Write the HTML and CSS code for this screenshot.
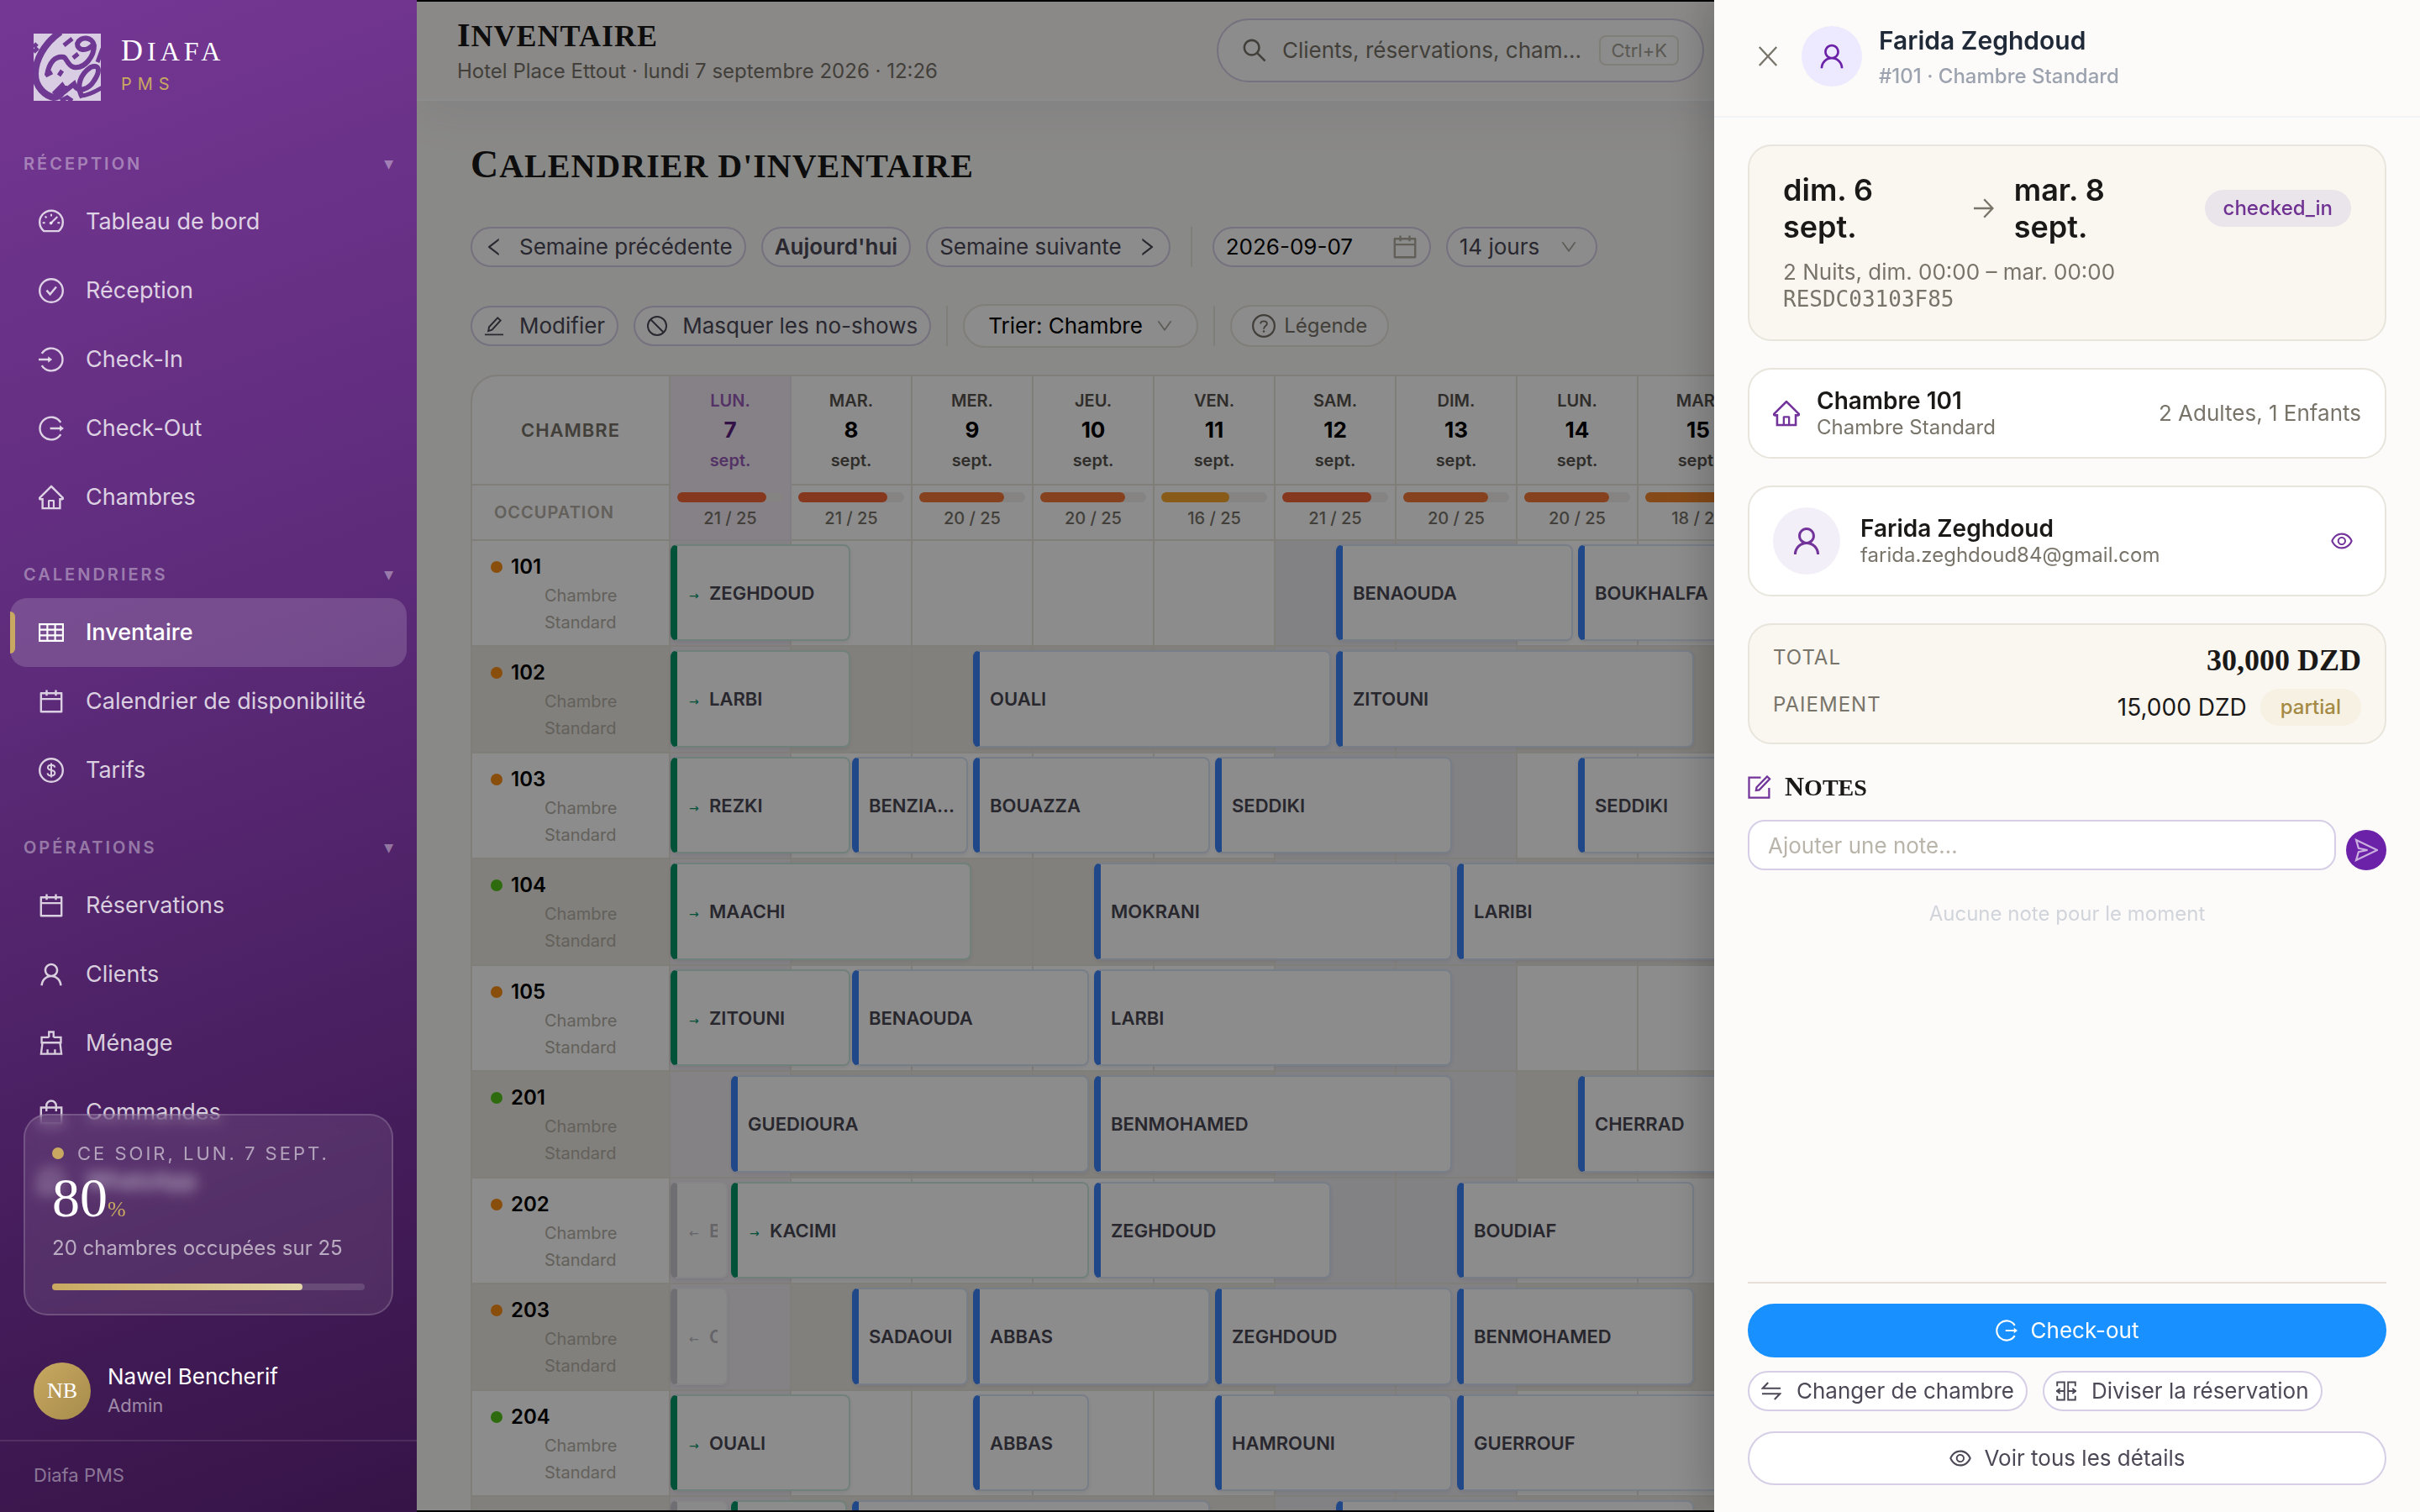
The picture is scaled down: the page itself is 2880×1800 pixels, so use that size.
FILE: index.html
```html
<!DOCTYPE html>
<html lang="fr">
<head>
<meta charset="utf-8">
<meta name="viewport" content="width=device-width, initial-scale=1">
<title>Inventaire · Diafa PMS</title>
<link rel="stylesheet" href="styles.css">
</head>
<body>
<svg class="sprite" aria-hidden="true">
  <symbol id="i-user" viewBox="64 64 896 896"><path d="M858.5 763.6a374 374 0 00-80.6-119.5 375.63 375.63 0 00-119.5-80.6c-.4-.2-.8-.3-1.2-.5C719.5 518 760 444.7 760 362c0-137-111-248-248-248S264 225 264 362c0 82.7 40.5 156 102.8 201.1-.4.2-.8.3-1.2.5-44.8 18.9-85 46-119.5 80.6a375.63 375.63 0 00-80.6 119.5A371.7 371.7 0 00136 901.8a8 8 0 008 8.2h60c4.4 0 7.9-3.5 8-7.8 2-77.2 33-149.5 87.8-204.3 56.7-56.7 132-87.9 212.2-87.9s155.5 31.2 212.2 87.9C779 752.7 810 825 812 902.2c.1 4.4 3.6 7.8 8 7.8h60a8 8 0 008-8.2c-1-47.8-10.9-94.3-29.5-138.2zM512 534c-45.9 0-89.1-17.9-121.6-50.4S340 407.9 340 362c0-45.9 17.9-89.1 50.4-121.6S466.1 190 512 190s89.1 17.9 121.6 50.4S684 316.1 684 362c0 45.9-17.9 89.1-50.4 121.6S557.9 534 512 534z"/></symbol>
  <symbol id="i-home" viewBox="64 64 896 896"><path d="M946.5 505L560.1 118.8l-25.9-25.9a31.5 31.5 0 00-44.4 0L77.5 505a63.9 63.9 0 00-18.8 46c.4 35.2 29.7 63.3 64.9 63.3h42.5V940h691.8V614.3h43.4c17.1 0 33.2-6.7 45.3-18.8a63.6 63.6 0 0018.7-45.3c0-17-6.7-33.1-18.8-45.2zM568 868H456V664h112v204zm217.9-325.7V868H632V640c0-22.1-17.9-40-40-40H432c-22.1 0-40 17.9-40 40v228H238.1V542.3h-96l370-369.7 23.1 23.1L882 542.3h-96.1z"/></symbol>
  <symbol id="i-eye" viewBox="64 64 896 896"><path d="M942.2 486.2C847.4 286.5 704.1 186 512 186c-192.2 0-335.4 100.5-430.2 300.3a60.3 60.3 0 000 51.5C176.6 737.5 319.9 838 512 838c192.2 0 335.4-100.5 430.2-300.3 7.7-16.2 7.7-35 0-51.5zM512 766c-161.3 0-279.4-81.8-362.7-254C232.6 339.8 350.7 258 512 258c161.3 0 279.4 81.8 362.7 254C791.5 684.2 673.4 766 512 766zm-4-430c-97.2 0-176 78.8-176 176s78.8 176 176 176 176-78.8 176-176-78.8-176-176-176zm0 288c-61.9 0-112-50.1-112-112s50.1-112 112-112 112 50.1 112 112-50.1 112-112 112z"/></symbol>
  <symbol id="i-calendar" viewBox="64 64 896 896"><path d="M880 184H712v-64c0-4.4-3.6-8-8-8h-56c-4.4 0-8 3.6-8 8v64H384v-64c0-4.4-3.6-8-8-8h-56c-4.4 0-8 3.6-8 8v64H144c-17.7 0-32 14.3-32 32v664c0 17.7 14.3 32 32 32h736c17.7 0 32-14.3 32-32V216c0-17.7-14.3-32-32-32zm-40 656H184V460h656v380zM184 392V256h128v48c0 4.4 3.6 8 8 8h56c4.4 0 8-3.6 8-8v-48h256v48c0 4.4 3.6 8 8 8h56c4.4 0 8-3.6 8-8v-48h128v136H184z"/></symbol>
  <symbol id="i-left" viewBox="64 64 896 896"><path d="M724 218.3V141c0-6.7-7.7-10.4-12.9-6.3L260.3 486.8a31.86 31.86 0 000 50.3l450.8 352.1c5.3 4.1 12.9.4 12.9-6.3v-77.3c0-4.9-2.3-9.6-6.1-12.6l-360-281 360-281.1c3.8-3 6.1-7.7 6.1-12.6z"/></symbol>
  <symbol id="i-right" viewBox="64 64 896 896"><path d="M765.7 486.8L314.9 134.7A7.97 7.97 0 00302 141v77.3c0 4.9 2.3 9.6 6.1 12.6l360 281.1-360 281.1c-3.9 3-6.1 7.7-6.1 12.6V883c0 6.7 7.7 10.4 12.9 6.3l450.8-352.1a31.96 31.96 0 000-50.4z"/></symbol>
  <symbol id="i-down" viewBox="64 64 896 896"><path d="M884 256h-75c-5.1 0-9.9 2.5-12.9 6.6L512 654.2 227.9 262.6c-3-4.1-7.8-6.6-12.9-6.6h-75c-6.5 0-10.3 7.4-6.5 12.7l352.6 486.1c12.8 17.6 39 17.6 51.7 0l352.6-486.1c3.9-5.3.1-12.7-6.4-12.7z"/></symbol>
  <symbol id="i-search" viewBox="64 64 896 896"><path d="M909.6 854.5L649.9 594.8C690.2 542.7 712 479 712 412c0-80.2-31.3-155.4-87.9-212.1-56.6-56.7-132-87.9-212.1-87.9s-155.5 31.3-212.1 87.9C143.2 256.5 112 331.8 112 412c0 80.1 31.3 155.5 87.9 212.1C256.5 680.8 331.8 712 412 712c67 0 130.6-21.8 182.7-62l259.7 259.6a8.2 8.2 0 0011.6 0l43.6-43.5a8.2 8.2 0 000-11.6zM570.4 570.4C528 612.7 471.8 636 412 636s-116-23.3-158.4-65.6C211.3 528 188 471.8 188 412s23.3-116.1 65.6-158.4C296 211.3 352.2 188 412 188s116.1 23.2 158.4 65.6S636 352.2 636 412s-23.3 116.1-65.6 158.4z"/></symbol>
  <symbol id="i-dashboard" viewBox="64 64 896 896"><g fill="none" stroke="currentColor" stroke-width="72"><path d="M250 844A412 412 0 1 1 774 844Z" stroke-linejoin="round"/><path d="M512 236v84M292 318l56 56M204 548h88M732 548h88" stroke-width="60"/><path d="M490 570L730 336" stroke-width="64"/></g><circle cx="500" cy="560" r="56"/></symbol>
  <symbol id="i-check" viewBox="64 64 896 896"><g fill="none" stroke="currentColor" stroke-width="72"><circle cx="512" cy="512" r="412"/><path d="M346 500L470 640L690 380"/></g></symbol>
  <symbol id="i-login" viewBox="64 64 896 896"><path fill="none" stroke="currentColor" stroke-width="72" d="M176 300A400 400 0 1 1 176 724M64 512H430"/><path d="M400 400L546 512L400 624Z"/></symbol>
  <symbol id="i-logout" viewBox="64 64 896 896"><path fill="none" stroke="currentColor" stroke-width="72" d="M848 300A400 400 0 1 0 848 724M470 512H840"/><path d="M814 400L960 512L814 624Z"/></symbol>
  <symbol id="i-table" viewBox="64 64 896 896"><path fill="none" stroke="currentColor" stroke-width="64" d="M96 216H928V808H96ZM96 410H928M96 614H928M374 216V808M650 216V808"/></symbol>
  <symbol id="i-dollar" viewBox="64 64 896 896"><g fill="none" stroke="currentColor" stroke-width="72"><circle cx="512" cy="512" r="412"/><path stroke-width="60" d="M640 408C632 346 580 322 512 322C440 322 390 356 390 412C390 540 642 470 642 610C642 672 586 704 512 704C436 704 386 676 380 612M512 256V768"/></g></symbol>
  <symbol id="i-broom" viewBox="64 64 896 896"><path fill="none" stroke="currentColor" stroke-width="70" d="M430 300V110H594V300M430 300H170V490H854V300H594M200 490L150 890H874L824 490M380 890V730M644 890V730"/></symbol>
  <symbol id="i-bag" viewBox="64 64 896 896"><path fill="none" stroke="currentColor" stroke-width="72" d="M148 350H876V908H148ZM340 480V280A172 172 0 0 1 684 280V480"/></symbol>
  <symbol id="i-chat" viewBox="64 64 896 896"><path fill="none" stroke="currentColor" stroke-width="76" d="M110 914L164 716A400 400 0 1 1 310 860ZM370 350Q390 620 670 670"/></symbol>
  <symbol id="i-edit" viewBox="64 64 896 896"><path fill="none" stroke="currentColor" stroke-width="72" d="M100 900H924M256 740L290 560L670 150L800 270L420 690Z"/></symbol>
  <symbol id="i-stop" viewBox="64 64 896 896"><g fill="none" stroke="currentColor" stroke-width="72"><circle cx="512" cy="512" r="412"/><path d="M222 222L802 802"/></g></symbol>
  <symbol id="i-question" viewBox="64 64 896 896"><g fill="none" stroke="currentColor" stroke-width="72"><circle cx="512" cy="512" r="412"/><path stroke-width="60" d="M390 432C390 300 634 300 634 432C634 520 512 510 512 630"/></g><circle cx="512" cy="722" r="40"/></symbol>
  <symbol id="i-close" viewBox="64 64 896 896"><path fill="none" stroke="currentColor" stroke-width="86" d="M130 100L894 924M894 100L130 924"/></symbol>
  <symbol id="i-arrow" viewBox="64 64 896 896"><path fill="none" stroke="currentColor" stroke-width="86" d="M64 512H900M520 110L900 512L520 914"/></symbol>
  <symbol id="i-form" viewBox="64 64 896 896"><path fill="none" stroke="currentColor" stroke-width="72" d="M560 148H112V912H876V540M380 640L400 520L800 110L900 200L500 620Z"/></symbol>
  <symbol id="i-send" viewBox="64 64 896 896"><path fill="none" stroke="currentColor" stroke-width="72" d="M130 130L930 512L130 894L220 580L560 512L220 444Z"/></symbol>
  <symbol id="i-swap" viewBox="64 64 896 896"><path fill="none" stroke="currentColor" stroke-width="76" d="M924 390H130L370 140M100 634H894L654 884"/></symbol>
  <symbol id="i-split" viewBox="64 64 896 896"><path fill="none" stroke="currentColor" stroke-width="72" d="M110 300V120H430V904H110V724M914 300V120H594V904H914V724M64 512H430M594 512H960M240 400L100 512L240 624M784 400L924 512L784 624"/></symbol>
</svg>

<div class="app">
  <aside class="sidebar">
    <a class="brand" href="#">
      <svg class="brand-logo" viewBox="0 0 80 80" aria-hidden="true">
        <rect width="80" height="80" fill="#d9cde4"/>
        <g fill="none" stroke="#6f3892">
          <path stroke-width="8" d="M32 -2C12 12 2 32 2 48C2 64 14 74 24 76C32 76 36 68 36 62"/>
          <path stroke-width="6" d="M16 50C18 34 26 26 36 28C40 30 40 38 48 40C62 42 72 26 72 14C70 4 56 2 52 12C52 20 62 22 70 14"/>
          <path stroke-width="6" d="M24 72L34 62L38 68L48 60C52 72 66 66 72 56C80 44 78 36 68 40C56 48 50 62 58 76"/>
          <path stroke-width="5" d="M36 14L46 6M47 29L53 24M56 74C64 74 72 70 82 64M0 22L5 17M0 16L4 12M32 80L40 76L46 80"/>
          <path stroke-width="5" d="M14 50L22 46M30 50L34 44M76 34L82 18"/>
        </g>
      </svg>
      <span class="brand-text"><span class="brand-name">Diafa</span><span class="brand-sub">PMS</span></span>
    </a>
    <nav class="nav" aria-label="Navigation principale">
      <section>
        <h2 class="nav-title">Réception<span class="caret">▼</span></h2>
        <a class="nav-item" href="#"><svg class="icon"><use href="#i-dashboard"/></svg>Tableau de bord</a>
        <a class="nav-item" href="#"><svg class="icon"><use href="#i-check"/></svg>Réception</a>
        <a class="nav-item" href="#"><svg class="icon"><use href="#i-login"/></svg>Check-In</a>
        <a class="nav-item" href="#"><svg class="icon"><use href="#i-logout"/></svg>Check-Out</a>
        <a class="nav-item" href="#"><svg class="icon"><use href="#i-home"/></svg>Chambres</a>
      </section>
      <section>
        <h2 class="nav-title">Calendriers<span class="caret">▼</span></h2>
        <a class="nav-item is-active" href="#" aria-current="page"><svg class="icon"><use href="#i-table"/></svg>Inventaire</a>
        <a class="nav-item" href="#"><svg class="icon"><use href="#i-calendar"/></svg>Calendrier de disponibilité</a>
        <a class="nav-item" href="#"><svg class="icon"><use href="#i-dollar"/></svg>Tarifs</a>
      </section>
      <section>
        <h2 class="nav-title">Opérations<span class="caret">▼</span></h2>
        <a class="nav-item" href="#"><svg class="icon"><use href="#i-calendar"/></svg>Réservations</a>
        <a class="nav-item" href="#"><svg class="icon"><use href="#i-user"/></svg>Clients</a>
        <a class="nav-item" href="#"><svg class="icon"><use href="#i-broom"/></svg>Ménage</a>
        <a class="nav-item" href="#"><svg class="icon"><use href="#i-bag"/></svg>Commandes</a>
        <a class="nav-item" href="#"><svg class="icon"><use href="#i-chat"/></svg>WhatsApp</a>
      </section>
    </nav>
    <div class="sidebar-bottom">
      <div class="tonight">
        <p class="tonight-label"><span class="tonight-dot"></span>Ce soir, lun. 7 sept.</p>
        <p class="tonight-rate">80<span>%</span></p>
        <p class="tonight-note">20 chambres occupées sur 25</p>
        <div class="tonight-track"><div class="tonight-fill" style="width:80%"></div></div>
      </div>
      <div class="account">
        <span class="account-avatar">NB</span>
        <span class="account-text"><span class="account-name">Nawel Bencherif</span><span class="account-role">Admin</span></span>
      </div>
      <p class="sidebar-foot">Diafa PMS</p>
    </div>
  </aside>

  <main class="main">
    <header class="topbar">
      <div>
        <p class="topbar-title">Inventaire</p>
        <p class="topbar-sub">Hotel Place Ettout · lundi 7 septembre 2026 · 12:26</p>
      </div>
      <label class="search">
        <svg class="icon"><use href="#i-search"/></svg>
        <input type="text" placeholder="Clients, réservations, cham..." aria-label="Rechercher">
        <kbd>Ctrl+K</kbd>
      </label>
    </header>

    <div class="content">
      <h1 class="page-title">Calendrier d'inventaire</h1>
      <div class="toolbar">
        <button class="pill" type="button"><svg class="icon"><use href="#i-left"/></svg>Semaine précédente</button>
        <button class="pill pill-strong" type="button">Aujourd'hui</button>
        <button class="pill" type="button">Semaine suivante<svg class="icon"><use href="#i-right"/></svg></button>
        <span class="separator separator-wide"></span>
        <label class="pill date"><input type="text" value="2026-09-07" aria-label="Date de début"><svg class="icon"><use href="#i-calendar"/></svg></label>
        <label class="pill range"><select aria-label="Période"><option>14 jours</option></select><svg class="icon"><use href="#i-down"/></svg></label>
      </div>
      <div class="toolbar toolbar-second">
        <button class="pill" type="button"><svg class="icon"><use href="#i-edit"/></svg>Modifier</button>
        <button class="pill" type="button"><svg class="icon"><use href="#i-stop"/></svg>Masquer les no-shows</button>
        <span class="separator"></span>
        <label class="pill sort"><select aria-label="Tri"><option>Trier: Chambre</option></select><svg class="icon"><use href="#i-down"/></svg></label>
        <span class="separator"></span>
        <button class="pill legend" type="button"><svg class="icon"><use href="#i-question"/></svg>Légende</button>
      </div>

      <div class="board">
        <table class="grid">
          <colgroup><col class="col-room"><col span="14"></colgroup>
          <thead>
            <tr class="days">
              <th class="corner" scope="col">Chambre</th>
              <th class="today" scope="col"><span class="dow">lun.</span><span class="num">7</span><span class="month">sept.</span></th>
              <th scope="col"><span class="dow">mar.</span><span class="num">8</span><span class="month">sept.</span></th>
              <th scope="col"><span class="dow">mer.</span><span class="num">9</span><span class="month">sept.</span></th>
              <th scope="col"><span class="dow">jeu.</span><span class="num">10</span><span class="month">sept.</span></th>
              <th scope="col"><span class="dow">ven.</span><span class="num">11</span><span class="month">sept.</span></th>
              <th scope="col"><span class="dow">sam.</span><span class="num">12</span><span class="month">sept.</span></th>
              <th scope="col"><span class="dow">dim.</span><span class="num">13</span><span class="month">sept.</span></th>
              <th scope="col"><span class="dow">lun.</span><span class="num">14</span><span class="month">sept.</span></th>
              <th scope="col"><span class="dow">mar.</span><span class="num">15</span><span class="month">sept.</span></th>
              <th></th><th></th><th></th><th></th><th></th>
            </tr>
            <tr class="load">
              <th class="load-title" scope="row">Occupation</th>
              <td class="today"><div class="meter"><div class="lv4" style="width:84%"></div></div>21 / 25</td>
              <td><div class="meter"><div class="lv4" style="width:84%"></div></div>21 / 25</td>
              <td><div class="meter"><div class="lv3" style="width:80%"></div></div>20 / 25</td>
              <td><div class="meter"><div class="lv3" style="width:80%"></div></div>20 / 25</td>
              <td><div class="meter"><div class="lv1" style="width:64%"></div></div>16 / 25</td>
              <td><div class="meter"><div class="lv4" style="width:84%"></div></div>21 / 25</td>
              <td><div class="meter"><div class="lv3" style="width:80%"></div></div>20 / 25</td>
              <td><div class="meter"><div class="lv3" style="width:80%"></div></div>20 / 25</td>
              <td><div class="meter"><div class="lv2" style="width:72%"></div></div>18 / 25</td>
              <td></td><td></td><td></td><td></td><td></td>
            </tr>
          </thead>
          <tbody>
            <tr>
              <th scope="row"><span class="room dirty">101</span><span class="type">Chambre Standard</span></th>
              <td><a class="stay in early" href="#" style="--n:1"><i>→</i>ZEGHDOUD</a></td><td></td><td></td><td></td><td></td>
              <td><a class="stay" href="#" style="--n:2">BENAOUDA</a></td><td></td>
              <td><a class="stay" href="#" style="--n:3">BOUKHALFA</a></td><td></td><td></td><td></td><td></td><td></td><td></td>
            </tr>
            <tr>
              <th scope="row"><span class="room dirty">102</span><span class="type">Chambre Standard</span></th>
              <td><a class="stay in early" href="#" style="--n:1"><i>→</i>LARBI</a></td><td></td>
              <td><a class="stay" href="#" style="--n:3">OUALI</a></td><td></td><td></td>
              <td><a class="stay" href="#" style="--n:3">ZITOUNI</a></td><td></td><td></td><td></td><td></td><td></td><td></td><td></td><td></td>
            </tr>
            <tr>
              <th scope="row"><span class="room dirty">103</span><span class="type">Chambre Standard</span></th>
              <td><a class="stay in early" href="#" style="--n:1"><i>→</i>REZKI</a></td>
              <td><a class="stay" href="#" style="--n:1">BENZIA...</a></td>
              <td><a class="stay" href="#" style="--n:2">BOUAZZA</a></td><td></td>
              <td><a class="stay" href="#" style="--n:2">SEDDIKI</a></td><td></td><td></td>
              <td><a class="stay" href="#" style="--n:3">SEDDIKI</a></td><td></td><td></td><td></td><td></td><td></td><td></td>
            </tr>
            <tr>
              <th scope="row"><span class="room clean">104</span><span class="type">Chambre Standard</span></th>
              <td><a class="stay in early" href="#" style="--n:2"><i>→</i>MAACHI</a></td><td></td><td></td>
              <td><a class="stay" href="#" style="--n:3">MOKRANI</a></td><td></td><td></td>
              <td><a class="stay" href="#" style="--n:3">LARIBI</a></td><td></td><td></td><td></td><td></td><td></td><td></td><td></td>
            </tr>
            <tr>
              <th scope="row"><span class="room dirty">105</span><span class="type">Chambre Standard</span></th>
              <td><a class="stay in early" href="#" style="--n:1"><i>→</i>ZITOUNI</a></td>
              <td><a class="stay" href="#" style="--n:2">BENAOUDA</a></td><td></td>
              <td><a class="stay" href="#" style="--n:3">LARBI</a></td><td></td><td></td><td></td><td></td><td></td><td></td><td></td><td></td><td></td><td></td>
            </tr>
            <tr>
              <th scope="row"><span class="room clean">201</span><span class="type">Chambre Standard</span></th>
              <td><a class="stay" href="#" style="--n:3">GUEDIOURA</a></td><td></td><td></td>
              <td><a class="stay" href="#" style="--n:3">BENMOHAMED</a></td><td></td><td></td><td></td>
              <td><a class="stay" href="#" style="--n:3">CHERRAD</a></td><td></td><td></td><td></td><td></td><td></td><td></td>
            </tr>
            <tr>
              <th scope="row"><span class="room dirty">202</span><span class="type">Chambre Standard</span></th>
              <td><a class="stay out early" href="#" style="--n:0"><i>←</i><span>B</span></a><a class="stay in" href="#" style="--n:3"><i>→</i>KACIMI</a></td><td></td><td></td>
              <td><a class="stay" href="#" style="--n:2">ZEGHDOUD</a></td><td></td><td></td>
              <td><a class="stay" href="#" style="--n:2">BOUDIAF</a></td><td></td><td></td><td></td><td></td><td></td><td></td><td></td>
            </tr>
            <tr>
              <th scope="row"><span class="room dirty">203</span><span class="type">Chambre Standard</span></th>
              <td><a class="stay out early" href="#" style="--n:0"><i>←</i><span>C</span></a></td>
              <td><a class="stay" href="#" style="--n:1">SADAOUI</a></td>
              <td><a class="stay" href="#" style="--n:2">ABBAS</a></td><td></td>
              <td><a class="stay" href="#" style="--n:2">ZEGHDOUD</a></td><td></td>
              <td><a class="stay" href="#" style="--n:2">BENMOHAMED</a></td><td></td><td></td><td></td><td></td><td></td><td></td><td></td>
            </tr>
            <tr>
              <th scope="row"><span class="room clean">204</span><span class="type">Chambre Standard</span></th>
              <td><a class="stay in early" href="#" style="--n:1"><i>→</i>OUALI</a></td><td></td>
              <td><a class="stay" href="#" style="--n:1">ABBAS</a></td><td></td>
              <td><a class="stay" href="#" style="--n:2">HAMROUNI</a></td><td></td>
              <td><a class="stay" href="#" style="--n:3">GUERROUF</a></td><td></td><td></td><td></td><td></td><td></td><td></td><td></td>
            </tr>
            <tr>
              <th></th>
              <td><span class="stay out early" style="--n:0"></span><span class="stay in" style="--n:1"></span></td>
              <td><span class="stay" style="--n:3"></span></td><td></td><td></td>
              <td></td>
              <td><span class="stay" style="--n:3"></span></td><td></td><td></td><td></td><td></td><td></td><td></td><td></td><td></td>
            </tr>
          </tbody>
        </table>
      </div>
    </div>
  </main>

  <div class="mask"></div>

  <aside class="drawer" aria-label="Réservation">
    <header class="drawer-head">
      <button class="bare" type="button" aria-label="Fermer"><svg class="icon icon-24"><use href="#i-close"/></svg></button>
      <span class="drawer-avatar"><svg class="icon icon-32"><use href="#i-user"/></svg></span>
      <div class="drawer-heading">
        <h2 class="drawer-name">Farida Zeghdoud</h2>
        <p class="drawer-sub">#101 · Chambre Standard</p>
      </div>
    </header>
    <div class="drawer-body">
      <section class="card card-warm stay-card">
        <div class="dates">
          <strong>dim. 6<br>sept.</strong>
          <svg class="icon icon-24"><use href="#i-arrow"/></svg>
          <strong>mar. 8<br>sept.</strong>
          <span class="badge badge-status">checked_in</span>
        </div>
        <p class="stay-info">2 Nuits, dim. 00:00 – mar. 00:00</p>
        <p class="stay-info mono">RESDC03103F85</p>
      </section>
      <section class="card room-card">
        <svg class="icon icon-32"><use href="#i-home"/></svg>
        <div class="card-main"><h3 class="card-title">Chambre 101</h3><p class="card-sub">Chambre Standard</p></div>
        <span class="guests">2 Adultes, 1 Enfants</span>
      </section>
      <section class="card guest-card">
        <span class="guest-avatar"><svg class="icon icon-36"><use href="#i-user"/></svg></span>
        <div class="card-main"><h3 class="card-title">Farida Zeghdoud</h3><p class="card-sub">farida.zeghdoud84@gmail.com</p></div>
        <button class="bare" type="button" aria-label="Voir le client"><svg class="icon icon-26"><use href="#i-eye"/></svg></button>
      </section>
      <section class="card card-warm">
        <dl class="money">
          <div><dt>Total</dt><dd class="total">30,000 DZD</dd></div>
          <div><dt>Paiement</dt><dd>15,000 DZD<span class="badge badge-partial">partial</span></dd></div>
        </dl>
      </section>
      <section>
        <h3 class="notes-title"><svg class="icon icon-28"><use href="#i-form"/></svg><span>Notes</span></h3>
        <form class="note-form">
          <input type="text" placeholder="Ajouter une note..." aria-label="Ajouter une note">
          <button type="button" aria-label="Envoyer"><svg class="icon icon-28"><use href="#i-send"/></svg></button>
        </form>
        <p class="notes-empty">Aucune note pour le moment</p>
      </section>
    </div>
    <footer class="drawer-foot">
      <button class="pill pill-large pill-primary" type="button"><svg class="icon"><use href="#i-logout"/></svg>Check-out</button>
      <div class="foot-row">
        <button class="pill" type="button"><svg class="icon"><use href="#i-swap"/></svg>Changer de chambre</button>
        <button class="pill" type="button"><svg class="icon"><use href="#i-split"/></svg>Diviser la réservation</button>
      </div>
      <button class="pill pill-large" type="button"><svg class="icon"><use href="#i-eye"/></svg>Voir tous les détails</button>
    </footer>
  </aside>
</div>
</body>
</html>
```
FILE: styles.css
```css
:root {
  --drawer: 840px;
  --sidebar: 496px;
  --serif: "Liberation Serif", serif;
  --sans: Inter, "Liberation Sans", sans-serif;
  --ink: #1a1918;
  --muted: #78746a;
  --button-ink: #4c4856;
  --line: #e8e5dd;
  --lilac: #d6cee6;
  --purple: #6b21a8;
  --gold: #c9a961;
}

* { box-sizing: border-box; }

body {
  margin: 0;
  background: #000;
  color: var(--ink);
  font-family: var(--sans);
  font-size: 26px;
  line-height: 32px;
}

h1, h2, h3, p, dl, dd { margin: 0; }
a { color: inherit; text-decoration: none; }
button, input, select { font: inherit; color: inherit; }
input, select { border: 0; background: none; outline: 0; padding: 0; min-width: 0; }
select { appearance: none; }

.sprite { position: absolute; width: 0; height: 0; }
.icon { flex: none; width: 24px; height: 24px; fill: currentColor; }
.icon-24 { width: 24px; height: 24px; }
.icon-26 { width: 26px; height: 26px; }
.icon-28 { width: 28px; height: 28px; }
.icon-32 { width: 32px; height: 32px; }
.icon-36 { width: 36px; height: 36px; }

.app {
  display: grid;
  grid-template-columns: var(--sidebar) minmax(0, 1fr);
  height: 100vh;
  overflow: hidden;
}

/* Sidebar */
.sidebar {
  position: relative;
  z-index: 3;
  overflow: hidden;
  height: 100vh;
  background: linear-gradient(160deg, #753794 0%, #5d2b7a 42%, #461d5c 75%, #361447 100%);
}

.brand {
  display: flex;
  gap: 24px;
  padding: 40px 40px 24px;
}
.brand-logo { width: 80px; height: 80px; }
.brand-text { display: flex; flex-direction: column; }
.brand-name {
  color: #fff;
  font: 32px/40px var(--serif);
  letter-spacing: 5px;
  text-transform: uppercase;
}
.brand-name::first-letter { font-size: 36px; }
.brand-sub {
  color: var(--gold);
  font-size: 20px;
  line-height: 38px;
  letter-spacing: 7px;
}

.nav-title {
  display: flex;
  justify-content: space-between;
  align-items: center;
  padding: 39px 28px 16px;
  color: rgba(255, 255, 255, .4);
  font-size: 20px;
  line-height: 24px;
  font-weight: 600;
  letter-spacing: 3px;
  text-transform: uppercase;
}
.caret { font-size: 14px; letter-spacing: 0; font-family: "DejaVu Sans", sans-serif; }

.nav-item {
  position: relative;
  display: flex;
  align-items: center;
  gap: 26px;
  height: 82px;
  margin: 0 12px;
  padding: 0 34px;
  border-radius: 20px;
  color: rgba(255, 255, 255, .78);
  font-size: 27px;
}
.nav-item .icon { width: 30px; height: 30px; }
.nav-item.is-active {
  background: rgba(255, 255, 255, .16);
  color: #fff;
  font-weight: 500;
}
.nav-item.is-active::before {
  content: "";
  position: absolute;
  left: 0;
  top: 16px;
  bottom: 16px;
  width: 6px;
  border-radius: 0 6px 6px 0;
  background: var(--gold);
}

.sidebar-bottom {
  position: absolute;
  inset: auto 0 0;
}
.tonight {
  margin: 0 28px 56px;
  padding: 32px 32px 28px;
  border: 2px solid rgba(255, 255, 255, .16);
  border-radius: 28px;
  background: rgba(255, 255, 255, .09);
  backdrop-filter: blur(8px);
}
.tonight-label {
  display: flex;
  align-items: center;
  gap: 16px;
  color: rgba(255, 255, 255, .55);
  font-size: 22px;
  line-height: 26px;
  letter-spacing: 3px;
  text-transform: uppercase;
}
.tonight-dot {
  width: 14px;
  height: 14px;
  border-radius: 50%;
  background: var(--gold);
}
.tonight-rate {
  margin: 4px 0 8px;
  color: #fff;
  font: 66px/72px var(--serif);
}
.tonight-rate span { font-size: 26px; line-height: 26px; color: var(--gold); }
.tonight-note {
  color: rgba(255, 255, 255, .6);
  font-size: 24px;
  line-height: 32px;
}
.tonight-track {
  height: 8px;
  margin-top: 26px;
  border-radius: 4px;
  background: rgba(255, 255, 255, .14);
}
.tonight-fill {
  height: 8px;
  border-radius: 4px;
  background: linear-gradient(90deg, #c9a961, #e3d5a8);
}
.account {
  display: flex;
  align-items: center;
  gap: 20px;
  padding: 0 40px 24px;
}
.account-avatar {
  display: grid;
  place-items: center;
  width: 68px;
  height: 68px;
  border-radius: 50%;
  background: linear-gradient(135deg, #c9a961, #a68b4b);
  color: #fff;
  font: 26px/32px var(--serif);
}
.account-text { display: flex; flex-direction: column; }
.account-name { color: #fff; line-height: 34px; }
.account-role { color: rgba(255, 255, 255, .5); font-size: 22px; line-height: 34px; }
.sidebar-foot {
  padding: 24px 40px 28px;
  border-top: 2px solid rgba(255, 255, 255, .1);
  color: rgba(255, 255, 255, .42);
  font-size: 22px;
}

/* Main column */
.main {
  overflow: hidden;
  height: 100vh;
  border-block: 2px solid #000;
  background: #faf9f6;
}
.topbar {
  display: flex;
  justify-content: space-between;
  align-items: center;
  height: 118px;
  padding: 0 calc(var(--drawer) + 12px) 0 48px;
  border-bottom: 2px solid #fff;
  background: #fbfaf7;
  box-shadow: 0 8px 64px rgba(80, 50, 110, .08);
}
.topbar-title {
  font: bold 36px/48px var(--serif);
  letter-spacing: 1px;
  text-transform: uppercase;
}
.topbar-title::first-letter { font-size: 40px; }
.topbar-sub { color: var(--muted); font-size: 24px; line-height: 36px; }
.search {
  display: flex;
  align-items: center;
  gap: 18px;
  width: 580px;
  height: 76px;
  padding: 0 28px;
  border: 2px solid var(--lilac);
  border-radius: 38px;
  background: #fff;
  color: var(--muted);
}
.search .icon { width: 30px; height: 30px; }
.search input { flex: 1; }
.search input::placeholder { color: var(--muted); opacity: 1; }
.search kbd {
  padding: 0 12px;
  border: 2px solid var(--line);
  border-radius: 8px;
  color: #a5a196;
  font: 22px/32px var(--sans);
}

.content { padding: 48px 64px 0; }
.page-title {
  margin-bottom: 44px;
  font: bold 40px/56px var(--serif);
  letter-spacing: 1px;
  text-transform: uppercase;
}
.page-title::first-letter { font-size: 46px; }

.toolbar { display: flex; align-items: center; gap: 18px; height: 48px; }
.toolbar-second { margin-top: 44px; height: 52px; }
.separator { width: 2px; height: 48px; background: var(--line); }
.separator-wide { margin: 0 6px; }

.pill {
  display: flex;
  align-items: center;
  gap: 18px;
  height: 48px;
  padding: 0 14px;
  border: 2px solid var(--lilac);
  border-radius: 32px;
  background: #fff;
  color: var(--button-ink);
  white-space: nowrap;
}
.pill-strong { font-weight: 600; }
.date { width: 260px; color: #000; }
.date input { flex: 1; }
.date .icon { width: 30px; height: 30px; color: #b3aea3; }
.range .icon, .sort .icon { width: 20px; height: 20px; color: #aaa69c; }
.range { padding-right: 22px; gap: 24px; }
.sort { height: 52px; padding: 0 28px; gap: 16px; color: #000; border-color: var(--line); }
.legend { height: 50px; padding: 0 24px; gap: 10px; color: var(--muted); border-color: var(--line); font-size: 24px; }
.legend .icon { width: 28px; height: 28px; }

/* Inventory board */
.board {
  margin-top: 32px;
  overflow: hidden;
  border: 2px solid var(--line);
  border-radius: 32px 32px 0 0;
  background: #fff;
}
.grid {
  width: 100%;
  table-layout: fixed;
  border-spacing: 0;
}
.grid th, .grid td {
  position: relative;
  padding: 0;
  border: 0 solid var(--line);
  border-width: 0 2px 2px 0;
  vertical-align: top;
  font-weight: 400;
}
.col-room { width: 236px; }
.grid .days th { height: 130px; padding-top: 15px; }
.grid .days .corner {
  padding: 0;
  vertical-align: middle;
  color: var(--muted);
  font-size: 22px;
  font-weight: 600;
  letter-spacing: 1px;
  text-transform: uppercase;
}
.dow, .num, .month {
  display: block;
  color: #57534e;
  font-size: 20px;
  line-height: 28px;
  font-weight: 600;
}
.dow { text-transform: uppercase; }
.num { color: #000; font-size: 26px; line-height: 42px; font-weight: 700; }
.month { line-height: 30px; }
.grid thead .today { background: #f2ecf5; border-color: #ebe5ee; }
.grid thead .days .today { border-bottom-color: #f2ecf5; }
.today .dow, .today .month { color: #9a5cba; }
.today .num { color: #5b2080; }
.grid .load td {
  height: 66px;
  padding: 8px 8px 0;
  color: var(--muted);
  font-size: 20px;
  line-height: 28px;
  font-weight: 500;
  text-align: center;
}
.grid .load-title {
  padding-left: 26px;
  vertical-align: middle;
  color: #b5b0a6;
  font-size: 20px;
  font-weight: 600;
  letter-spacing: 1px;
  text-align: left;
  text-transform: uppercase;
}
.meter {
  height: 12px;
  margin-bottom: 5px;
  border-radius: 6px;
  background: #f3f1ee;
}
.meter div { height: 12px; border-radius: 6px; }
.lv1 { background: #f7a62c; }
.lv2 { background: #f5872c; }
.lv3 { background: #f5793a; }
.lv4 { background: #f4663a; }

.grid tbody tr { height: 126px; }
.grid tbody tr:nth-child(even) { height: 127px; background: #ece9e2; }
.grid tbody td:nth-of-type(1) { background: #f1edf3; }
.grid tbody td:nth-of-type(6),
.grid tbody td:nth-of-type(7) { background: #ededf3; }
.grid tbody th { padding: 13px 16px 0 22px; text-align: left; }
.room {
  display: flex;
  align-items: center;
  gap: 10px;
  color: #000;
  font-size: 24px;
  line-height: 36px;
  font-weight: 600;
}
.room::before {
  content: "";
  width: 14px;
  height: 14px;
  border-radius: 50%;
  background: #fa8c16;
}
.room.clean::before { background: #52c41a; }
.type {
  display: block;
  padding-left: 64px;
  color: #b5b0a6;
  font-size: 20px;
  line-height: 32px;
}

/* A stay runs from noon to noon, across the cells of its nights. */
.stay {
  position: absolute;
  z-index: 1;
  top: 4px;
  bottom: 5px;
  left: calc(50% + 1px);
  width: calc(var(--n) * (100% + 2px) - 6px);
  display: flex;
  align-items: center;
  padding-left: 12px;
  overflow: hidden;
  border: 2px solid #dbe6f8;
  border-left: 8px solid #3b82f6;
  border-radius: 8px;
  background: #fff;
  box-shadow: 0 2px 4px rgba(40, 40, 80, .08);
  color: #4a4754;
  font-size: 22px;
  font-weight: 600;
}
.stay i {
  width: 24px;
  padding-top: 6px;
  color: #059669;
  font: 14px/16px "DejaVu Sans", sans-serif;
}
.stay.in { border-color: #cdeadf; border-left-color: #059669; padding-left: 14px; }
.stay.early { left: 0; width: calc((var(--n) + .5) * (100% + 2px) - 2px); }
.stay.out { width: calc(50% - 3px); border-color: #f3f2f6; border-left-color: #c9c8d2; color: #b9b7c0; background: #faf9fb; padding-left: 14px; }
.stay.out i { color: #b9b7c0; }
.stay.out span { width: 10px; overflow: hidden; }

.mask {
  position: fixed;
  inset: 0;
  z-index: 2;
  background: rgba(0, 0, 0, .45);
}

/* Reservation drawer */
.drawer {
  position: fixed;
  inset: 0 0 0 auto;
  z-index: 4;
  display: flex;
  flex-direction: column;
  width: var(--drawer);
  background: #fcfbf9;
  box-shadow: -8px 0 48px rgba(0, 0, 0, .22);
}
.bare { display: flex; padding: 0; border: 0; background: none; color: var(--muted); }
.drawer-head {
  display: flex;
  align-items: center;
  height: 140px;
  padding: 0 52px 4px;
  border-bottom: 2px solid #f1f3f5;
}
.drawer-avatar {
  display: grid;
  place-items: center;
  width: 72px;
  height: 72px;
  margin: 0 20px 0 28px;
  border-radius: 50%;
  background: #ede9fe;
  color: var(--purple);
}
.drawer-heading { padding-top: 6px; }
.drawer-name { color: #1f2937; font-size: 30px; line-height: 42px; font-weight: 600; }
.drawer-sub { color: #9ca3af; font-size: 24px; line-height: 44px; font-weight: 500; }

.drawer-body {
  flex: 1;
  display: flex;
  flex-direction: column;
  gap: 32px;
  padding: 32px 40px 0;
}
.card {
  padding: 20px 28px;
  border: 2px solid var(--line);
  border-radius: 28px;
  background: #fff;
}
.card-warm { background: #faf7f1; }
.stay-card { padding: 30px 40px 32px; }
.dates {
  display: grid;
  grid-template-columns: 1fr 24px 1fr auto;
  gap: 24px;
  align-items: center;
  margin-bottom: 16px;
  color: var(--muted);
}
.dates strong { color: var(--ink); font-size: 36px; line-height: 44px; font-weight: 600; }
.badge {
  padding: 0 24px;
  border-radius: 22px;
  font-size: 24px;
  line-height: 44px;
  font-weight: 500;
}
.badge-status { padding: 0 22px; background: #eae4eb; color: #6f3292; }
.badge-partial { background: #f6f1e2; color: #a48a45; }
.stay-info { color: var(--muted); }
.mono { font-family: "DejaVu Sans Mono", monospace; }

.room-card, .guest-card { display: flex; align-items: center; color: #72339a; }
.room-card { gap: 20px; }
.guest-card { gap: 24px; padding: 24px 28px; }
.card-main { flex: 1; }
.card-title { color: var(--ink); font-size: 28px; line-height: 34px; font-weight: 600; }
.card-sub { color: var(--muted); font-size: 24px; line-height: 30px; }
.guests { color: var(--muted); }
.guest-avatar {
  display: grid;
  place-items: center;
  width: 80px;
  height: 80px;
  border-radius: 50%;
  background: #f3eff8;
}
.guest-card .bare { padding: 0 10px; color: #72339a; }

.money div { display: flex; justify-content: space-between; }
.money div + div { margin-top: 8px; }
.money dt {
  color: var(--muted);
  font-size: 24px;
  line-height: 38px;
  letter-spacing: 1px;
  text-transform: uppercase;
}
.money dd { display: flex; align-items: center; gap: 16px; font-size: 28px; line-height: 44px; }
.money .total { padding-bottom: 4px; font: bold 36px/44px var(--serif); }

.notes-title {
  display: flex;
  align-items: center;
  gap: 16px;
  color: #72339a;
  font: bold 28px/36px var(--serif);
}
.notes-title span { display: block; color: var(--ink); text-transform: uppercase; }
.notes-title span::first-letter { font-size: 32px; }
.note-form { display: flex; align-items: flex-end; gap: 12px; margin-top: 20px; }
.note-form input {
  flex: 1;
  height: 60px;
  padding: 0 22px;
  border: 2px solid var(--lilac);
  border-radius: 20px;
  background: #fff;
}
.note-form input::placeholder { color: #b9b5aa; opacity: 1; }
.note-form button {
  display: grid;
  place-items: center;
  width: 48px;
  height: 48px;
  padding: 0;
  border: 0;
  border-radius: 50%;
  background: var(--purple);
  color: #c9aede;
}
.notes-empty { margin-top: 36px; color: #d1d5db; font-size: 24px; text-align: center; }

.drawer-foot {
  display: flex;
  flex-direction: column;
  margin: 0 40px;
  padding: 24px 0 32px;
  border-top: 2px solid #e6e0d8;
}
.pill-large { justify-content: center; gap: 16px; height: 64px; }
.pill-primary { border-color: #1890ff; background: #1890ff; color: #fff; }
.pill-large .icon { width: 26px; height: 26px; }
.foot-row { display: flex; gap: 18px; margin: 16px 0 24px; }
```
